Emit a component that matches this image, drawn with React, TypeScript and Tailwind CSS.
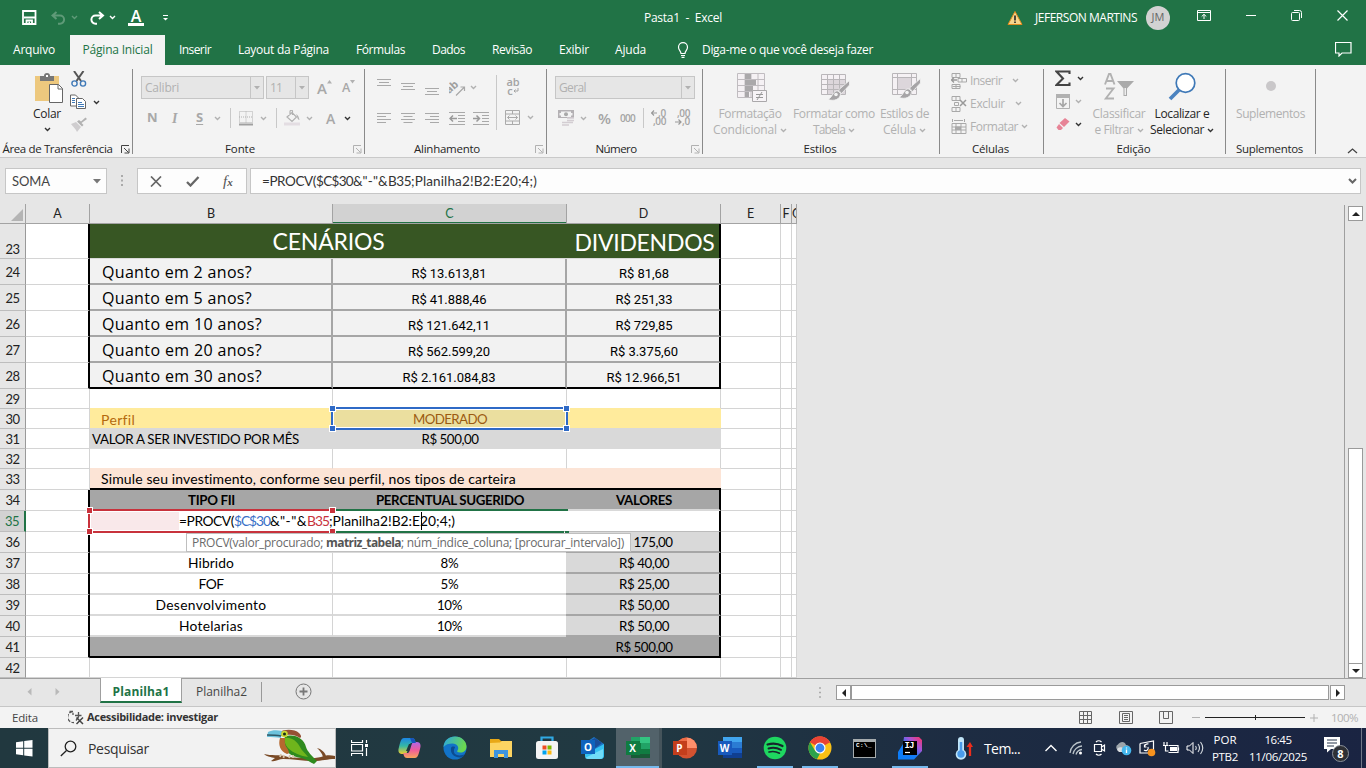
import React, { useLayoutEffect, useRef } from "react";

/* Text run whose tracking is adjusted so that it fills a given width. */
function T({ w, className = "", children }: { w: number; className?: string; children: React.ReactNode }) {
  const ref = useRef<HTMLSpanElement>(null);
  useLayoutEffect(() => {
    const el = ref.current;
    if (!el) return;
    el.style.letterSpacing = "0px";
    const n = (el.textContent || "").length || 1;
    const spacing = (w - el.getBoundingClientRect().width) / n;
    el.style.letterSpacing = `${spacing}px`;
  }, [w]);
  return (
    <span ref={ref} className={`inline-block shrink-0 whitespace-pre ${className}`}>
      {children}
    </span>
  );
}

function Svg({ w, h, className = "", children }: { w: number; h: number; className?: string; children: React.ReactNode }) {
  return (
    <svg width={w} height={h} viewBox={`0 0 ${w} ${h}`} fill="none" className={`block shrink-0 ${className}`}>
      {children}
    </svg>
  );
}

const Chev = ({ className = "text-[#b1b1b1]" }: { className?: string }) => (
  <Svg w={7} h={5} className={className}>
    <path d="M1 1l2.500 2.500L6 1" stroke="currentColor" strokeWidth="1.400" />
  </Svg>
);

const G = "#b1b1b1";

/* ---------- Title bar ---------- */

function TitleBar() {
  return (
    <div className="flex h-[35px] items-center text-white">
      <Svg w={15} h={15} className="ml-[22px]">
        <path d="M1 1h12.500v13H1z" stroke="#fff" strokeWidth="1.800" />
        <path d="M2 7.500h11M4.500 14v-3.500h5.500V14" stroke="#fff" strokeWidth="1.800" />
        <path d="M6.500 11.500h1.500V14H6.500z" fill="#fff" />
      </Svg>
      <Svg w={15} h={14} className="ml-[14px]">
        <path d="M5.500 1L1.500 4.500l4 3.500M2 4.500h7a4 4 0 010 8.200H7" stroke="#5f9a78" strokeWidth="2" />
      </Svg>
      <Chev className="ml-[5px] text-[#5f9a78]" />
      <Svg w={16} h={14} className="ml-[11px]">
        <path d="M10 1l4 3.500-4 3.500M14 4.500H6.500a4 4 0 000 8.200H8" stroke="#fff" strokeWidth="2" />
      </Svg>
      <Chev className="ml-[4px] text-white" />
      <div className="ml-[12px] flex w-4 flex-col items-center">
        <span className="h-[13px] font-['Open_Sans',sans-serif] text-[16px] leading-[13px] font-semibold">A</span>
        <div className="h-[3px] w-4 bg-white" />
      </div>
      <Svg w={7} h={8} className="ml-[18px]">
        <path d="M1 1.500h5" stroke="#fff" />
        <path d="M1 4h5L3.500 6.500z" fill="#fff" />
      </Svg>
      <T w={78} className="ml-[475px] text-[12px]">Pasta1  -  Excel</T>
      <Svg w={16} h={16} className="ml-[285px]">
        <path d="M8 1.500L15 14.500H1z" fill="#f8d58c" stroke="#e08a1e" />
        <path d="M8 5.500v5M8 11.500v1.600" stroke="#222" strokeWidth="1.600" />
      </Svg>
      <T w={102} className="ml-[12px] text-[12px]">JEFERSON MARTINS</T>
      <div className="ml-[9px] flex size-6 items-center justify-center rounded-full bg-[#d2d2d2] text-[11px] text-[#666]">JM</div>
      <Svg w={14} h={11} className="mb-[5px] ml-[27px]">
        <path d="M.5.500h13v10H.500zM.5 2.500h13M7 9V4.500M4.700 6.500L7 4.300l2.300 2.200" stroke="#fff" />
      </Svg>
      <Svg w={11} h={11} className="mb-[5px] ml-[35px]"><path d="M0 5.500h10" stroke="#fff" /></Svg>
      <Svg w={11} h={11} className="mb-[5px] ml-[34px]">
        <path d="M.5 3.500a1 1 0 011-1h6a1 1 0 011 1v6a1 1 0 01-1 1h-6a1 1 0 01-1-1zM3 .500h5.500a2 2 0 012 2V8" stroke="#fff" />
      </Svg>
      <Svg w={11} h={11} className="mb-[5px] ml-[35px]"><path d="M.5.500l10 10M10.500.500l-10 10" stroke="#fff" strokeWidth="1.200" /></Svg>
    </div>
  );
}

function Tabs() {
  return (
    <div className="flex h-[30px] items-center text-[12px] text-white">
      <T w={42} className="ml-[13px]">Arquivo</T>
      <div className="ml-[15px] flex h-full w-[95px] items-center justify-center bg-[#f3f3f3] text-[#217346]">
        <T w={70}>Página Inicial</T>
      </div>
      <T w={32} className="ml-[14px]">Inserir</T>
      <T w={91} className="ml-[27px]">Layout da Página</T>
      <T w={49} className="ml-[27px]">Fórmulas</T>
      <T w={33} className="ml-[27px]">Dados</T>
      <T w={40} className="ml-[27px]">Revisão</T>
      <T w={30} className="ml-[27px]">Exibir</T>
      <T w={31} className="ml-[26px]">Ajuda</T>
      <Svg w={12} h={16} className="ml-[31px]">
        <path d="M4 11.500C4 9 1.500 8 1.500 5.200a4.500 4.500 0 019 0C10.500 8 8 9 8 11.500zM4 13.500h4M4.500 15.300h3" stroke="#fff" strokeWidth="1.200" />
      </Svg>
      <T w={171} className="ml-[13px]">Diga-me o que você deseja fazer</T>
      <Svg w={17} h={16} className="mt-[-2px] ml-[462px]">
        <path d="M.5 1.500h15.500v10.500H7L4 15v-3H.500z" stroke="#fff" strokeWidth="1.200" />
      </Svg>
    </div>
  );
}

/* ---------- Ribbon ---------- */

function Launcher({ dark = false }: { dark?: boolean }) {
  return (
    <Svg w={9} h={9} className={dark ? "text-[#444]" : "text-[#b1b1b1]"}>
      <path d="M.5 8V.500H8M3 3l4.500 4.500M8 3.500V8H3.500" stroke="currentColor" />
    </Svg>
  );
}

function Group({ className, label, lw, launcher, dark, children }: {
  className: string; label: string; lw: number; launcher?: boolean; dark?: boolean; children: React.ReactNode;
}) {
  return (
    <div className={`mt-1 flex h-[85px] shrink-0 flex-col border-r border-[#8a8a8a] ${className}`}>
      <div className="h-[71px] shrink-0">{children}</div>
      <div className="flex h-[18px] shrink-0 items-center pr-[2px]">
        <div className={`flex flex-1 justify-center text-[11.500px] text-[#262626] ${launcher ? "pr-[6px]" : ""}`}><T w={lw}>{label}</T></div>
        {launcher && <Launcher dark={dark} />}
      </div>
    </div>
  );
}

function Clipboard() {
  return (
    <div className="flex pl-[30px]">
      <div className="flex w-[34px] flex-col items-center pt-[4px]">
        <Svg w={29} h={31} className="ml-[5px]">
          <path d="M0 3h24v25H0z" fill="#edc87e" />
          <path d="M5 3h4a3 3 0 016 0h4v5H5z" fill="#777" />
          <path d="M11 2h2v2h-2z" fill="#fff" />
          <path d="M14.500 11.500h9l4 4v14h-13z" fill="#fff" stroke="#666" />
          <path d="M23 11.500V16h4.500" stroke="#666" />
        </Svg>
        <T w={28} className="mt-[1px] text-[12px] leading-[18px] text-[#262626]">Colar</T>
        <Chev className="mt-[4px] text-[#333]" />
      </div>
      <div className="flex flex-col pl-[6px]">
        <Svg w={16} h={16} className="mt-[2px] ml-[1px]">
          <path d="M3 0l7 10M12.500 0l-7 10" stroke="#555" strokeWidth="2" />
          <circle cx="3.500" cy="12.500" r="2.600" stroke="#3f79b7" strokeWidth="1.400" />
          <circle cx="12" cy="12.500" r="2.600" stroke="#3f79b7" strokeWidth="1.400" />
        </Svg>
        <div className="mt-[7px] flex items-center">
          <Svg w={17} h={16}>
            <path d="M.5 1h5l3 3v8h-8z" fill="#fff" stroke="#666" />
            <path d="M6.500 4.500h6l3 3v7h-9z" fill="#fff" stroke="#666" />
            <path d="M2 4.500h3M2 6.500h3M2 8.500h3M8 8.500h4M8 10.500h6M8 12.500h6" stroke="#3f79b7" />
          </Svg>
          <Chev className="ml-[6px] text-[#333]" />
        </div>
        <Svg w={17} h={15} className="mt-[7px] ml-[1px]">
          <path d="M0 7l5-2 5 5-4 5C5 12 2 10 0 7z" fill="#cfcdcf" />
          <path d="M6 4.500l5 5 1.500-1.500-2-2 5.500-4L14.500.500 10 4.500l-2-1.500z" fill="#b1b1b1" />
        </Svg>
      </div>
    </div>
  );
}

function Combo({ className, text, tw }: { className: string; text: string; tw: number }) {
  return (
    <div className={`flex h-[23px] items-center border border-[#c6c6c6] bg-[#e6e6e6] pl-[3px] text-[12px] text-[#b1b1b1] ${className}`}>
      <T w={tw}>{text}</T>
      <div className="ml-auto flex h-full w-[13px] items-center justify-center border-l border-[#c6c6c6]">
        <Svg w={6} h={4}><path d="M0 0h6L3 3.500z" fill="#b1b1b1" /></Svg>
      </div>
    </div>
  );
}

function FontGroup() {
  return (
    <div className="text-[#a8a8a8]">
      <div className="flex h-[37px] items-center pt-[1px] pl-2">
        <Combo className="mt-[-1px] w-[123px]" text="Calibri" tw={34} />
        <Combo className="mt-[-1px] ml-[2px] w-[43px]" text="11" tw={12} />
        <span className="ml-[8px] text-[15px] leading-5 font-semibold">A</span>
        <Svg w={5} h={4} className="mb-[12px]"><path d="M0 3.500h5L2.500 0z" fill={G} /></Svg>
        <span className="ml-[10px] text-[12.500px] leading-5 font-semibold">A</span>
        <Svg w={5} h={4} className="mb-[12px]"><path d="M0 0h5L2.500 3.500z" fill={G} /></Svg>
      </div>
      <div className="flex h-[24px] items-center text-[13px] font-bold">
        <span className="ml-[14px] w-[25px]">N</span>
        <span className="w-[24px] font-['Liberation_Serif',serif] text-[14px] italic">I</span>
        <span className="w-[18px] underline underline-offset-2">S</span>
        <Chev />
        <div className="ml-[9px] h-5 w-px bg-[#c8c8c8]" />
        <Svg w={14} h={15} className="ml-[8px]">
          <path d="M.5.500h13v11H.500zM7 .500v11M0 6h14" stroke={G} strokeDasharray="1 1" />
          <path d="M0 13.500h14" stroke="#a0a0a0" strokeWidth="2" />
        </Svg>
        <Chev className="ml-[7px] text-[#b1b1b1]" />
        <div className="ml-[9px] h-5 w-px bg-[#c8c8c8]" />
        <Svg w={17} h={16} className="ml-[7px]">
          <path d="M3 7l5-4.500L12.500 7 8 11.500zM6 5V1.500a1 1 0 012.500 0V5" stroke={G} strokeWidth="1.200" />
          <path d="M12 4c2 1 3 3 3.500 6-2 0-2-3-3.500-6z" fill={G} />
          <path d="M0 12.500h16v3H0z" fill="#e3dde2" />
        </Svg>
        <Chev className="ml-[5px] text-[#b1b1b1]" />
        <span className="ml-[13px] text-[14px] font-semibold">A</span>
        <Chev className="ml-[9px] text-[#333]" />
      </div>
    </div>
  );
}

function Lines({ d, className = "" }: { d: string; className?: string }) {
  return <Svg w={15} h={12} className={className}><path d={d} stroke="#a9a9a9" /></Svg>;
}

function AlignGroup() {
  const three = "M0 1.500h14M2 4.500h10M0 7.500h14";
  return (
    <div className="flex pl-[12px]">
      <div className="w-[119px]">
        <div className="flex h-[37px] items-center">
          <Lines d={three} className="mb-[7px]" />
          <Lines d={three} className="mt-[1px] ml-[9px]" />
          <Lines d={three} className="mt-[11px] ml-[9px]" />
          <Svg w={17} h={16} className="ml-[9px]">
            <text x="-2" y="9" fontSize="11" fontFamily="Open Sans, sans-serif" fontWeight="700" fill="#a0a0a0" transform="rotate(-42 6 9)">ab</text>
            <path d="M7 15.500L15 7.500M11.500 7h4v4" stroke="#a8a8a8" strokeWidth="1.200" />
          </Svg>
          <Chev className="ml-[4px] text-[#b1b1b1]" />
        </div>
        <div className="flex h-[24px] items-center">
          <Lines d="M0 1.500h14M0 4.500h9M0 7.500h14M0 10.500h9" />
          <Lines d="M0 1.500h14M2.500 4.500h9M0 7.500h14M2.500 10.500h9" className="ml-[9px]" />
          <Lines d="M0 1.500h14M5 4.500h9M0 7.500h14M5 10.500h9" className="ml-[9px]" />
          <Svg w={16} h={13} className="ml-[9px]">
            <path d="M0 .500h16M9 3.500h7M9 6.500h7M9 9.500h7M0 12.500h16" stroke="#a9a9a9" />
            <path d="M1 6.500h7M4 3.500l-3 3 3 3" stroke="#999" strokeWidth="1.500" />
          </Svg>
          <Svg w={16} h={13} className="ml-[8px]">
            <path d="M0 .500h16M9 3.500h7M9 6.500h7M9 9.500h7M0 12.500h16" stroke="#a9a9a9" />
            <path d="M0 6.500h6M3.500 3.500l3 3-3 3" stroke="#999" strokeWidth="1.500" />
          </Svg>
        </div>
      </div>
      <div className="mt-[6px] h-[55px] w-px bg-[#c8c8c8]" />
      <div className="pl-[8px]">
        <div className="mt-[8px] flex h-[19px] w-4 flex-col items-center text-[11px] leading-[9px] font-semibold text-[#a4a4a4]">
          <span>ab</span>
          <div className="flex items-center"><span>c</span>
            <Svg w={6} h={7}><path d="M5 1v3H1M2.500 2.500L1 4l1.500 1.500" stroke="#a4a4a4" /></Svg>
          </div>
        </div>
        <div className="mt-[9px] flex h-[25px] items-center">
          <Svg w={15} h={15}>
            <path d="M.5.500h14v14H.500zM.5 4h14M.5 11h14M7.500 .500v3.500M7.500 11v3.500M2.500 7.500h10M4.500 5.500l-2 2 2 2M10.500 5.500l2 2-2 2" stroke="#aaa" />
          </Svg>
          <Chev className="ml-[7px] text-[#b1b1b1]" />
        </div>
      </div>
    </div>
  );
}

function NumberGroup() {
  return (
    <div className="pl-[8px]">
      <div className="flex h-[37px] items-center">
        <Combo className="w-[140px]" text="Geral" tw={27} />
      </div>
      <div className="flex h-[24px] items-center text-[#a4a4a4]">
        <Svg w={16} h={16} className="ml-[3px]">
          <path d="M0 0h16v8H0z" fill="#b4b1b4" />
          <path d="M3 1.500h10v1.500h1.500v2.500H13V7H3V5.500H1.500V3H3z" fill="#f3f3f3" />
          <circle cx="8" cy="4.200" r="2" fill="#a9a9a9" />
          <path d="M9 8h7M9 10.500h7M4 12.500h11M4 15h7" stroke="#d3cdd2" strokeWidth="1.700" />
        </Svg>
        <Chev className="ml-[6px] text-[#b1b1b1]" />
        <span className="ml-[11px] text-[15px] leading-4 font-semibold">%</span>
        <T w={15} className="ml-[9px] text-[10px] font-semibold">000</T>
        <div className="ml-[8px] h-[20px] w-px bg-[#c8c8c8]" />
        <div className="ml-[7px] flex h-[18px] w-[15px] flex-col text-[10px] leading-[9px] font-semibold">
          <div className="flex h-[8px] items-center justify-end"><Svg w={7} h={6}><path d="M0 3h6M3 .500L.500 3 3 5.500" stroke="#999" strokeWidth="1.200" /></Svg><T w={8}>,0</T></div>
          <div className="flex h-[9px] items-center justify-end"><T w={13}>,00</T></div>
        </div>
        <div className="ml-[9px] flex h-[18px] w-[15px] flex-col text-[10px] leading-[9px] font-semibold">
          <div className="flex h-[8px] items-center justify-end"><T w={13}>,00</T></div>
          <div className="flex h-[9px] items-center justify-end"><Svg w={7} h={6}><path d="M0 3h6M3.500 .500L6 3 3.500 5.500" stroke="#999" strokeWidth="1.200" /></Svg><T w={8}>,0</T></div>
        </div>
      </div>
    </div>
  );
}

function BigButton({ className, icon, a, aw, b, bw, dark = false }: {
  className: string; icon: React.ReactNode; a: string; aw: number; b: string; bw: number; dark?: boolean;
}) {
  return (
    <div className={`flex shrink-0 flex-col items-center text-[12px] leading-4 ${dark ? "text-[#262626]" : "text-[#b1b1b1]"} ${className}`}>
      <div className="mt-[3px] flex h-[34px] items-start">{icon}</div>
      <T w={aw}>{a}</T>
      {b && (
        <div className="flex items-center"><T w={bw}>{b}</T><Chev className={dark ? "ml-[3px] text-[#333]" : "ml-[3px] text-[#b1b1b1]"} /></div>
      )}
    </div>
  );
}

const Brush = () => (
  <>
    <path d="M28.500 6.500l-11 9.500 3 3.500L28.500 11z" fill="#a6a4a6" stroke="#f3f3f3" strokeWidth=".8" />
    <path d="M17 17c-5-1-5 6-10 8.500 6 2 12.500 0 12.500-6z" fill="#a6a4a6" stroke="#f3f3f3" strokeWidth=".8" />
    <circle cx="15" cy="20.500" r="1.800" fill="#f3f3f3" />
  </>
);

function StylesGroup() {
  return (
    <div className="flex">
      <BigButton className="w-[94px]" a="Formatação" aw={63} b="Condicional" bw={64} icon={
        <Svg w={31} h={31} className="ml-[5px]">
          <path d="M.5 1.500h27v24H.500z" fill="#f5f1f4" stroke="#c0bcc0" />
          <path d="M.5 7.500h27M.5 13.500h27M.5 19.500h27M8 1.500v24M14 1.500v24M21 1.500v24" stroke="#c0bcc0" />
          <path d="M8 2h6v5H8zM8 8h11v5H8zM8 14h8v5H8zM8 20h4v5H8z" fill="#aaa8aa" />
          <path d="M15.500 18.500h14v11h-14z" fill="#f7f4f7" stroke="#aaa8aa" />
          <path d="M19 22.500h7M19 25.500h7M25 20l-5 8" stroke="#999" />
        </Svg>} />
      <BigButton className="w-[74px]" a="Formatar como" aw={82} b="Tabela" bw={32} icon={
        <Svg w={30} h={31} className="mt-[2px] ml-[4px]">
          <path d="M.5 .500h24v20H.500z" fill="#f5f1f4" stroke="#b9b6b9" />
          <path d="M7 6h17v14H7z" fill="#dcd6db" />
          <path d="M.5 5.500h24M.5 10.500h24M.5 15.500h24M6.500 .500v20M12.500 .500v20M18.500 .500v20" stroke="#b9b6b9" />
          <Brush />
        </Svg>} />
      <BigButton className="ml-[5px] w-[57px]" a="Estilos de" aw={49} b="Célula" bw={33} icon={
        <Svg w={30} h={31} className="ml-[4px]">
          <path d="M.5 1.500h24v21H.500z" fill="#f5f1f4" stroke="#b9b6b9" />
          <path d="M6 6h14v11H6z" fill="#dcd6db" />
          <path d="M.5 5.500h24M.5 17.500h24M5.500 1.500v21M19.500 1.500v21" stroke="#b9b6b9" />
          <Brush />
        </Svg>} />
    </div>
  );
}

function CellsGroup() {
  const row = "flex h-[23px] items-center pl-[11px] text-[12px] text-[#b1b1b1]";
  return (
    <div>
      <div className={row}>
        <Svg w={16} h={16}>
          <path d="M1 .500h8v4H1zM5 .500v4M1 11.500h8v4H1zM5 11.500v4M1.500 13.500h8M7 5.500h8.500v3.500H7zM11 5.500V9" stroke="#a9a9a9" />
          <path d="M6 7H.500M3 4.500L.500 7 3 9.500" stroke="#999" strokeWidth="1.300" />
        </Svg>
        <T w={32} className="ml-[3px]">Inserir</T><Chev className="ml-[10px] text-[#b1b1b1]" />
      </div>
      <div className={row}>
        <Svg w={16} h={16}>
          <path d="M1 .500h8v4H1zM5 .500v4M1 11.500h8v4H1zM5 11.500v4M3.500 6.500h4v3h-4z" stroke="#a9a9a9" />
          <path d="M9 4l6 6M15 4l-6 6" stroke="#999" strokeWidth="1.500" />
        </Svg>
        <T w={35} className="ml-[3px]">Excluir</T><Chev className="ml-[10px] text-[#b1b1b1]" />
      </div>
      <div className={row}>
        <Svg w={16} h={16}>
          <path d="M1.500 0v3M13.500 0v3M3 1.500h9M1 4.500h14v10H1zM1 8h14M1 11h14M5 4.500v10M10 4.500v10" stroke="#a9a9a9" />
          <path d="M4 7.500h6V11H4z" fill="#a9a9a9" />
        </Svg>
        <T w={48} className="ml-[3px]">Formatar</T><Chev className="ml-[3px] text-[#b1b1b1]" />
      </div>
    </div>
  );
}

function EditGroup() {
  return (
    <div className="flex">
      <div className="w-[46px] pl-[11px]">
        <div className="flex h-[19px] items-center">
          <Svg w={16} h={17}>
            <path d="M14.500 4V1.500H1.500L8 8.500l-6.500 6.500H14.500V12.500" stroke="#444" strokeWidth="2.100" />
          </Svg>
          <Chev className="ml-[6px] text-[#333]" />
        </div>
        <div className="mt-[4px] flex h-[19px] items-center">
          <Svg w={15} h={16} className="ml-[1px]">
            <path d="M.5.500h13v14H.500z" stroke={G} /><path d="M0 0h14v4H0z" fill={G} />
            <path d="M7 5v7.500M3.500 9L7 12.500 10.500 9" stroke="#a6a6a6" strokeWidth="1.700" />
          </Svg>
          <Chev className="ml-[4px] text-[#b1b1b1]" />
        </div>
        <div className="mt-[4px] flex h-[19px] items-center">
          <Svg w={14} h={13} className="ml-[1px]">
            <path d="M9 0l4.500 3.500L8 9 3.500 5z" fill="#e78396" /><path d="M3 6l4 4-2 2H2.500L.500 9.500z" fill="#e78396" />
          </Svg>
          <Chev className="ml-[5px] text-[#333]" />
        </div>
      </div>
      <BigButton className="w-[58px]" a="Classificar" aw={53} b="e Filtrar" bw={39} icon={
        <Svg w={32} h={30} className="ml-[-1px]">
          <path d="M2 12.500L6 2h1.500l4 10.500M3.500 9h6.500M3 16.500h7.500L2.800 26.500H11" stroke="#b1b1b1" strokeWidth="1.900" />
          <path d="M14 9h17l-7 7.500V24h-3.500v-7.500z" fill="#aaa" /><path d="M21.500 16h1.500v7h-1.500z" fill="#eee" />
        </Svg>} />
      <BigButton dark className="w-[68px]" a="Localizar e" aw={55} b="Selecionar" bw={54} icon={
        <Svg w={28} h={30}>
          <circle cx="17.500" cy="11" r="9.300" fill="#fff" stroke="#3f79b7" strokeWidth="1.700" />
          <path d="M11 18L2 27" stroke="#4b83c0" strokeWidth="3.800" />
        </Svg>} />
    </div>
  );
}

function Ribbon() {
  return (
    <div className="flex h-[93px] border-b border-[#c9c9c9] bg-[#f3f3f3]">
      <Group className="w-[133px]" label="Área de Transferência" lw={110} launcher dark><Clipboard /></Group>
      <Group className="w-[232px]" label="Fonte" lw={30} launcher><FontGroup /></Group>
      <Group className="w-[182px]" label="Alinhamento" lw={66} launcher><AlignGroup /></Group>
      <Group className="w-[156px]" label="Número" lw={41} launcher><NumberGroup /></Group>
      <Group className="w-[237px]" label="Estilos" lw={33}><StylesGroup /></Group>
      <Group className="w-[104px]" label="Células" lw={37}><CellsGroup /></Group>
      <Group className="w-[182px]" label="Edição" lw={34}><EditGroup /></Group>
      <Group className="w-[90px]" label="Suplementos" lw={67}>
        <BigButton className="w-[89px]" a="Suplementos" aw={69} b="" bw={0} icon={<div className="mt-[9px] size-[10px] rounded-full bg-[#c9c7c9]" />} />
      </Group>
      <Svg w={11} h={8} className="mt-[82px] mr-[8px] ml-auto"><path d="M1 6l4.500-4L10 6" stroke="#444" strokeWidth="1.300" /></Svg>
    </div>
  );
}

function FormulaBar() {
  return (
    <div className="flex h-[46px] items-start bg-[#e6e6e6] pt-[10px] text-[#444]">
      <div className="ml-[5px] flex h-[26px] w-[102px] items-center border border-[#c6c6c6] bg-[#fdfdfd] pt-[2px] pl-[6px] font-['Lato',sans-serif] text-[13px]">
        <T w={38}>SOMA</T>
        <Svg w={8} h={5} className="mr-[5px] mb-[2px] ml-auto"><path d="M0 0h8L4 4.500z" fill="#777" /></Svg>
      </div>
      <Svg w={3} h={12} className="mt-[7px] ml-[14px]"><path d="M0 1h2M0 5.500h2M0 10h2" stroke="#aaa" strokeWidth="2" /></Svg>
      <div className="ml-[13px] flex h-[26px] w-[110px] items-center border border-[#c6c6c6] bg-[#fdfdfd]">
        <Svg w={12} h={11} className="ml-[12px]"><path d="M1 .500l10 10M11 .500L1 10.500" stroke="#666" strokeWidth="1.700" /></Svg>
        <Svg w={14} h={11} className="ml-[24px]"><path d="M1 6l3.500 3.500L12.500 1" stroke="#666" strokeWidth="2.300" /></Svg>
        <span className="ml-[23px] font-['Liberation_Serif',serif] text-[15px] leading-4 text-[#555] italic">f<span className="text-[11px] font-bold">x</span></span>
      </div>
      <div className="ml-[3px] flex h-[26px] w-[1111px] items-center border border-[#c6c6c6] bg-[#fdfdfd] pl-[11px] font-['Lato',sans-serif] text-[13.500px] text-[#333]">
        <T w={54}>=PROCV(</T><T w={37}>$C$30</T><T w={35}>&amp;"-"&amp;</T><T w={23}>B35</T><T w={126}>;Planilha2!B2:E20;4;)</T>
        <Svg w={9} h={6} className="mr-[3px] ml-auto"><path d="M1 1l3.500 3.500L8 1" stroke="#666" strokeWidth="2" /></Svg>
      </div>
    </div>
  );
}

/* ---------- Sheet ---------- */

const colA = "w-[64px]", colB = "w-[243px]", colC = "w-[234px]", colD = "w-[154px]";
const cell = "flex shrink-0 items-center justify-center ";
const grid = "border-r border-b border-[#d4d4d4] ";

function Row({ n, h, left = false, children }: { n: number; h: string; left?: boolean; children: React.ReactNode }) {
  const active = n === 35;
  return (
    <div className={`flex shrink-0 ${h}`}>
      <div className={`flex w-[26px] shrink-0 justify-center border-b border-b-[#bdbdbd] text-[13px] leading-4 ${n === 23 ? "items-end pb-px" : n < 29 ? "items-center pt-px" : "items-center"} ${active ? "border-r-2 border-r-[#217346] bg-[#d2d2d2] text-[#217346]" : "border-r border-r-[#999] bg-[#e6e6e6] text-[#222]"}`}>
        <T w={14}>{n}</T>
      </div>
      <div className={`shrink-0 border-b border-b-[#d4d4d4] bg-white ${colA} ${left ? "border-r-2 border-r-black" : "border-r border-r-[#d4d4d4]"}`} />
      {children}
      <div className={`w-[60px] shrink-0 bg-white ${grid}`} />
      <div className={`w-[11px] shrink-0 bg-white ${grid}`} />
      <div className={`w-[5px] shrink-0 bg-white ${grid}`} />
    </div>
  );
}

const scenarios = [
  { n: 24, q: "Quanto em 2 anos?", qw: 150, c: "R$ 13.613,81", cw: 75, d: "R$ 81,68", dw: 50 },
  { n: 25, q: "Quanto em 5 anos?", qw: 150, c: "R$ 41.888,46", cw: 75, d: "R$ 251,33", dw: 57 },
  { n: 26, q: "Quanto em 10 anos?", qw: 160, c: "R$ 121.642,11", cw: 82, d: "R$ 729,85", dw: 57 },
  { n: 27, q: "Quanto em 20 anos?", qw: 160, c: "R$ 562.599,20", cw: 82, d: "R$ 3.375,60", dw: 68 },
  { n: 28, q: "Quanto em 30 anos?", qw: 160, c: "R$ 2.161.084,83", cw: 93, d: "R$ 12.966,51", dw: 75 },
];

const funds = [
  { n: 36, name: "", nw: 0, p: "", pw: 0, v: "R$ 175,00", vw: 57 },
  { n: 37, name: "Hibrido", nw: 46, p: "8%", pw: 18, v: "R$ 40,00", vw: 50 },
  { n: 38, name: "FOF", nw: 25, p: "5%", pw: 18, v: "R$ 25,00", vw: 50 },
  { n: 39, name: "Desenvolvimento", nw: 111, p: "10%", pw: 25, v: "R$ 50,00", vw: 50 },
  { n: 40, name: "Hotelarias", nw: 64, p: "10%", pw: 25, v: "R$ 50,00", vw: 50 },
];

function HeadCell({ className, children }: { className: string; children?: React.ReactNode }) {
  return <div className={`flex shrink-0 items-center justify-center overflow-hidden border-r border-b border-[#a3a3a3] pt-[2px] ${className}`}>{children}</div>;
}

function Handle({ className }: { className: string }) {
  return <div className={`absolute size-[7px] border border-white ${className}`} />;
}

function Sheet() {
  return (
    <div className="relative h-[474px] w-[797px] shrink-0 overflow-hidden font-['Lato',sans-serif] text-[13.300px] text-black">
      <div className="flex h-5 text-[12.500px] text-[#222]">
        <HeadCell className="w-[26px]"><Svg w={12} h={12} className="ml-[8px]"><path d="M12 0v12H0z" fill="#b4b4b4" /></Svg></HeadCell>
        <HeadCell className={colA}>A</HeadCell>
        <HeadCell className={colB}>B</HeadCell>
        <HeadCell className={`bg-[#d2d2d2] text-[#217346] shadow-[inset_0_-1px_0_#217346] ${colC}`}>C</HeadCell>
        <HeadCell className={colD}>D</HeadCell>
        <HeadCell className="w-[60px]">E</HeadCell>
        <HeadCell className="w-[11px]">F</HeadCell>
        <HeadCell className="w-[5px] justify-start">G</HeadCell>
      </div>

      <Row n={23} h="h-[35px]" left>
        <div className={`${cell} w-[477px] border-b border-[#d9d9d9] bg-[#375623] pt-px text-[23px] text-white`}><T w={112}>CENÁRIOS</T></div>
        <div className={`${cell} ${colD} border-r-2 border-b border-r-black border-b-[#d9d9d9] bg-[#375623] pt-[3px] pl-[3px] text-[23px] text-white`}><T w={140}>DIVIDENDOS</T></div>
      </Row>
      {scenarios.map((s) => {
        const bottom = s.n === 28 ? "border-b-2 border-b-black " : "border-b-2 border-b-[#a6a6a6] ";
        return (
          <Row key={s.n} n={s.n} h="h-[26px]" left>
            <div className={`flex shrink-0 items-center border-r-2 border-r-[#a6a6a6] bg-[#f2f2f2] pt-[1px] pl-[12px] font-['Open_Sans',sans-serif] text-[16px] leading-5 ${bottom} ${colB}`}><T w={s.qw}>{s.q}</T></div>
            <div className={`${cell} border-r-2 border-r-[#a6a6a6] bg-[#f2f2f2] pt-[5px] font-['Roboto',sans-serif] text-[13px] ${bottom} ${colC}`}><T w={s.cw}>{s.c}</T></div>
            <div className={`${cell} border-r-2 border-r-black bg-[#f2f2f2] pt-[5px] pl-[2px] font-['Roboto',sans-serif] text-[13px] ${bottom} ${colD}`}><T w={s.dw}>{s.d}</T></div>
          </Row>
        );
      })}
      <Row n={29} h="h-[20px]">
        <div className={`shrink-0 border-r border-b border-r-[#d4d4d4] border-b-[#ffeb9c] bg-white ${colB}`} />
        <div className={`shrink-0 border-r border-b border-r-[#d4d4d4] border-b-[#ffeb9c] bg-white ${colC}`} />
        <div className={`shrink-0 border-r border-b border-r-[#d4d4d4] border-b-[#ffeb9c] bg-white ${colD}`} />
      </Row>
      <Row n={30} h="h-[20px]">
        <div className={`flex shrink-0 items-center border-b border-[#d9d9d9] bg-[#ffeb9c] pt-px pl-[11px] text-[14px] text-[#b4690e] ${colB}`}><T w={34}>Perfil</T></div>
        <div className={`${cell} bg-[#ebdf9f] pt-[2px] text-[#9c5b12] ${colC}`}><T w={74}>MODERADO</T></div>
        <div className={`shrink-0 border-b border-[#d9d9d9] bg-[#ffeb9c] ${colD}`} />
      </Row>
      <Row n={31} h="h-[20px]">
        <div className={`flex shrink-0 items-center bg-[#d9d9d9] pt-[2px] pl-[2px] ${colB}`}><T w={207}>VALOR A SER INVESTIDO POR MÊS</T></div>
        <div className={`${cell} bg-[#d9d9d9] pt-[2px] ${colC}`}><T w={57}>R$ 500,00</T></div>
        <div className={`shrink-0 bg-[#d9d9d9] ${colD}`} />
      </Row>
      <Row n={32} h="h-[20px]">
        <div className={`shrink-0 border-r border-b border-r-[#d4d4d4] border-b-[#fce4d6] bg-white ${colB}`} />
        <div className={`shrink-0 border-r border-b border-r-[#d4d4d4] border-b-[#fce4d6] bg-white ${colC}`} />
        <div className={`shrink-0 border-r border-b border-r-[#d4d4d4] border-b-[#fce4d6] bg-white ${colD}`} />
      </Row>
      <Row n={33} h="h-[21px]">
        <div className="flex w-[631px] shrink-0 items-center border-b-2 border-black bg-[#fce4d6] pl-[11px] text-[14px]"><T w={415}>Simule seu investimento, conforme seu perfil, nos tipos de carteira</T></div>
      </Row>
      <Row n={34} h="h-[21px]" left>
        <div className={`${cell} bg-[#a6a6a6] pt-px font-bold ${colB}`}><T w={47}>TIPO FII</T></div>
        <div className={`${cell} bg-[#a6a6a6] pt-px font-bold ${colC}`}><T w={148}>PERCENTUAL SUGERIDO</T></div>
        <div className={`${cell} border-r-2 border-b-2 border-r-black border-b-[#d9d9d9] bg-[#a6a6a6] pt-[3px] pl-[2px] font-bold ${colD}`}><T w={56}>VALORES</T></div>
      </Row>
      <Row n={35} h="h-[21px]" left>
        <div className="w-[89px] shrink-0 bg-[#f9e8ea]" />
        <div className="flex w-[542px] shrink-0 items-center border-r-2 border-b border-r-black border-b-[#bbb] bg-white pt-px text-[13.800px]">
          <T w={55}>=PROCV(</T>
          <T w={36} className="text-[#3a6fc7]">$C$30</T>
          <T w={37}>&amp;"-"&amp;</T>
          <T w={22} className="text-[#c8323c]">B35</T>
          <T w={126}>;Planilha2!B2:E20;4;)</T>
        </div>
      </Row>
      {funds.map((f) => (
        <Row key={f.n} n={f.n} h="h-[21px]" left>
          <div className={`${cell} border-r border-b-2 border-r-[#d4d4d4] border-b-[#d9d9d9] bg-white pt-px text-[13.800px] ${colB}`}>{f.name && <T w={f.nw}>{f.name}</T>}</div>
          <div className={`${cell} w-[233px] border-b-2 border-b-[#d9d9d9] bg-white pt-[3px]`}>{f.p && <T w={f.pw}>{f.p}</T>}</div>
          <div className={`${cell} w-[155px] border-r-2 border-b-2 border-r-black border-b-[#a6a6a6] bg-[#d9d9d9] pt-[3px] pl-[3px]`}><T w={f.vw}>{f.v}</T></div>
        </Row>
      ))}
      <Row n={41} h="h-[21px]" left>
        <div className="w-[477px] shrink-0 border-b-2 border-black bg-[#a6a6a6]" />
        <div className={`${cell} border-r-2 border-b-2 border-black bg-[#a6a6a6] pt-[3px] pl-[2px] ${colD}`}><T w={57}>R$ 500,00</T></div>
      </Row>
      <Row n={42} h="h-[20px]">
        <div className={`shrink-0 bg-white ${grid} ${colB}`} />
        <div className={`shrink-0 bg-white ${grid} ${colC}`} />
        <div className={`shrink-0 bg-white ${grid} ${colD}`} />
      </Row>

      {/* Reference range C30 */}
      <div className="absolute top-[203px] left-[331px] h-[23px] w-[237px] border-2 border-[#2f6ac6] shadow-[inset_0_0_0_1px_#fff]" />
      <Handle className="top-[201px] left-[329px] bg-[#2f6ac6]" />
      <Handle className="top-[201px] left-[563px] bg-[#2f6ac6]" />
      <Handle className="top-[221px] left-[329px] bg-[#2f6ac6]" />
      <Handle className="top-[221px] left-[563px] bg-[#2f6ac6]" />
      {/* Edited cell C35 and reference B35 */}
      <div className="absolute top-[305px] left-[333px] h-[2px] w-[235px] bg-[#217346]" />
      <div className="absolute top-[327px] left-[333px] h-[2px] w-[231px] bg-[#217346]" />
      <div className="absolute top-[327px] left-[565px] h-[3px] w-[4px] bg-[#217346]" />
      <div className="absolute top-[305px] left-[88px] h-[24px] w-[245px] border-y-2 border-l-2 border-[#c8323c] shadow-[inset_1px_1px_0_#fff,inset_0_-1px_0_#fff]" />
      <Handle className="top-[303px] left-[86px] bg-[#c8323c]" />
      <Handle className="top-[303px] left-[329px] bg-[#c8323c]" />
      <Handle className="top-[324px] left-[86px] bg-[#c8323c]" />
      <Handle className="top-[324px] left-[329px] bg-[#c8323c]" />
      <div className="absolute top-[308px] left-[421px] h-[18px] w-px bg-black" />
      <div className="absolute top-[329px] left-[186px] flex h-[19px] w-[445px] items-center border border-[#bfbfbf] bg-white pl-[5px] font-['Open_Sans',sans-serif] text-[12px] text-[#6a6a6a]">
        <T w={134}>{"PROCV(valor_procurado; "}</T><T w={75} className="font-bold text-[#555]">matriz_tabela</T><T w={223}>; núm_índice_coluna; [procurar_intervalo])</T>
      </div>
    </div>
  );
}

function Arrow({ d, className }: { d: string; className: string }) {
  return (
    <div className={`flex size-[15px] shrink-0 items-center justify-center border border-[#9a9a9a] bg-white ${className}`}>
      <Svg w={8} h={8}><path d={d} fill="#222" /></Svg>
    </div>
  );
}

function SheetTabs() {
  return (
    <div className="flex h-[29px] shrink-0 border-t border-b border-t-[#9f9f9f] border-b-[#c6c6c6] bg-[#e6e6e6] text-[12px]">
      <Svg w={5} h={8} className="mt-[9px] ml-[27px]"><path d="M4.500 0v7.500L.500 3.800z" fill="#b9b9b9" /></Svg>
      <Svg w={5} h={8} className="mt-[9px] ml-[23px]"><path d="M.5 0v7.500l4-3.700z" fill="#b9b9b9" /></Svg>
      <div className="mt-[-1px] ml-[40px] flex h-[25px] w-[82px] items-center justify-center border-x border-b-2 border-x-[#9f9f9f] border-b-[#217346] bg-white pt-[4px] font-bold text-[#217346]"><T w={57}>Planilha1</T></div>
      <T w={51} className="mt-[4px] ml-[14px] text-[#444]">Planilha2</T>
      <div className="mt-[3px] ml-[14px] h-[20px] w-px bg-[#999]" />
      <Svg w={17} h={17} className="mt-[4px] ml-[33px]">
        <circle cx="8.500" cy="8.500" r="7.500" stroke="#777" /><path d="M8.500 4.500v8M4.500 8.500h8" stroke="#777" strokeWidth="1.800" />
      </Svg>
      <Svg w={3} h={12} className="mt-[8px] mr-[14px] ml-auto"><path d="M0 1h2M0 5.500h2M0 10h2" stroke="#aaa" strokeWidth="1.500" /></Svg>
      <Arrow d="M6 0v8L2 4z" className="mt-[6px]" />
      <div className="mt-[6px] h-[15px] w-[478px] border border-[#9a9a9a] bg-white" />
      <Arrow d="M2 0v8l4-4z" className="mt-[6px] mr-[21px] ml-px" />
    </div>
  );
}

function StatusBar() {
  return (
    <div className="flex h-[21px] shrink-0 items-center bg-[#f3f3f3] text-[11.500px] text-[#444]">
      <T w={26} className="ml-[12px]">Edita</T>
      <Svg w={17} h={15} className="ml-[30px]">
        <path d="M4.500 1.500A5.500 5.500 0 006 12.500M1.500 1.500h3.500v3.500" stroke="#555" strokeWidth="1.300" strokeDasharray="3.500 1.300" />
        <path d="M7 5.500h6.500M10.500 2v5L8 10.500" stroke="#555" strokeWidth="1.300" />
        <path d="M8.500 7.500l6.500 6.500M15 7.500L8.500 14" stroke="#444" strokeWidth="1.500" />
      </Svg>
      <T w={131} className="ml-[2px] text-[11px] font-bold text-[#333]">Acessibilidade: investigar</T>
      <Svg w={13} h={13} className="ml-[861px]"><path d="M.5.500h12v12H.500zM4.500.500v12M8.500.500v12M.5 4.500h12M.5 8.500h12" stroke="#666" /></Svg>
      <Svg w={14} h={13} className="ml-[27px]"><path d="M.5.500h13v12H.500zM3.500 2.500h7v8h-7zM5 4.500h4M5 6.500h4M5 8.500h4" stroke="#666" /></Svg>
      <Svg w={14} h={13} className="ml-[26px]"><path d="M.5.500h13v12H.500zM4.500.500v7h5v-7M9.500 7.500V3" stroke="#666" /></Svg>
      <div className="ml-[19px] h-px w-[8px] bg-[#b1b1b1]" />
      <div className="ml-[5px] flex h-[5px] w-[100px] items-center justify-center bg-[linear-gradient(#222,#222)] bg-[length:100%_1px] bg-center bg-no-repeat"><div className="h-[5px] w-px bg-[#222]" /></div>
      <Svg w={8} h={8} className="ml-[5px]"><path d="M4 0v8M0 4h8" stroke="#b1b1b1" /></Svg>
      <T w={27} className="ml-[13px] text-[#b1b1b1]">100%</T>
    </div>
  );
}

/* ---------- Taskbar ---------- */

function Toucan() {
  return (
    <Svg w={72} h={36}>
      <path d="M1 25c7 2 15 0 24 3 12 1 24 2 33 0 5-2 9-2 14-1v3c-8 0-12 2-22 2-10 0-20-2-30-2-4 0-7 3-12 2l4-3c-4-1-8-1-11-4z" fill="#7a4a26" />
      <path d="M60 28c-1-4-3-6-6-9 4 1 8 4 9 8z" fill="#7a4a26" />
      <path d="M22 8C30 4 41 9 43 18c1 4 6 9 11 14l-3 3c-6-3-8-5-13-6-7-1-14-4-17-11-1-4-1-7 1-10z" fill="#2f8a1e" />
      <path d="M22 9c6-1 12 3 15 9 2 4 5 6 8 10-7-1-15-4-20-9-3-3-4-7-3-10z" fill="#6fb51c" />
      <path d="M17 3c4-3 15-3 19 1 2 2 3 4 1 5-3-2-8-4-13-3l-6 1z" fill="#955034" />
      <path d="M17 9c-2 7 0 13 7 16 3 0 2-3 0-6-3-4-2-8-2-10z" fill="#b5682f" />
      <path d="M5 3c4-2 9-2 14-1l-1 7C13 8 9 8 4 8z" fill="#6cc2dc" />
      <path d="M4 6c5 0 9 0 14 1" stroke="#2e5867" strokeWidth="1.300" />
      <circle cx="21.500" cy="5" r="3.300" fill="#c9d934" /><circle cx="21.500" cy="5" r="1.500" fill="#142b19" />
      <path d="M18 25l-1 3M21 26l-.5 3M27 26l-1 3M30 26v3" stroke="#d9c7aa" strokeWidth="1.800" />
    </Svg>
  );
}

function TaskItem({ className = "w-[46px]", run = false, active = false, children }: {
  className?: string; run?: boolean; active?: boolean; children: React.ReactNode;
}) {
  return (
    <div className={`flex h-full shrink-0 flex-col items-center ${className} ${active ? "border-r-[3px] border-[#45545b] bg-[#52626a]" : ""}`}>
      <div className="flex h-[38px] items-center justify-center pt-[2px]">{children}</div>
      {run && <div className={`h-[2px] bg-[#76b9ed] ${active ? "w-full" : "w-[36px]"}`} />}
    </div>
  );
}

const letter = "absolute top-[4px] left-0 flex size-[14px] items-center justify-center text-[10px] leading-none font-bold text-white ";

function Taskbar() {
  return (
    <div className="flex h-[40px] shrink-0 items-center bg-[linear-gradient(90deg,#21383f,#213942_45%,#1d2c42_70%,#1a2442)] text-white">
      <div className="flex h-full w-[48px] items-center justify-center">
        <Svg w={17} h={17}><path d="M0 2.300L7.200 1.300v6.500H0zM8.200 1.100L16.500 0v7.800H8.200zM0 8.800h7.200v6.500L0 14.300zM8.200 8.800h8.300v7.700l-8.300-1.100z" fill="#fff" /></Svg>
      </div>
      <div className="flex h-full w-[288px] items-center border border-[#bcbcbc] bg-[#f2f2f2] text-[#333]">
        <Svg w={17} h={17} className="ml-[11px]"><circle cx="10.500" cy="6.500" r="5.300" stroke="#222" strokeWidth="1.300" /><path d="M6.500 10.500L.800 16" stroke="#222" strokeWidth="1.300" /></Svg>
        <T w={61} className="ml-[11px] text-[14px]">Pesquisar</T>
        <div className="mb-[2px] ml-auto"><Toucan /></div>
      </div>
      <div className="flex h-full w-[48px] items-center justify-center">
        <Svg w={18} h={16}><path d="M.5 0v2.500h11V0M.5 4.500h11v6.500H.500zM.5 16v-2.500h11V16M15.500 0v3M15.500 8v8" stroke="#fff" strokeWidth="1.200" /><path d="M14 4h3v3h-3z" fill="#fff" /></Svg>
      </div>
      <TaskItem className="ml-[2px] w-[46px]">
        <Svg w={23} h={22}>
          <defs>
            <linearGradient id="cp1" x1="0" y1="0" x2="0" y2="1"><stop stopColor="#1b85e6" /><stop offset=".5" stopColor="#35b8a4" /><stop offset="1" stopColor="#f1cf2c" /></linearGradient>
            <linearGradient id="cp2" x1="0" y1="0" x2="0" y2="1"><stop stopColor="#b067e8" /><stop offset=".5" stopColor="#ee5b9b" /><stop offset="1" stopColor="#f7a55b" /></linearGradient>
          </defs>
          <path d="M6 1h8c3 0 3 3 4 5h-5c-2 0-3 9-5 11H4c-4 0-4-4-3-7 1-4 2-9 5-9z" fill="url(#cp1)" />
          <path d="M17 21H9c-3 0-3-3-4-5h5c2 0 3-9 5-11h4c4 0 4 4 3 7-1 4-2 9-5 9z" fill="url(#cp2)" />
          <path d="M12 1h2c3 0 3 3 4 5h-4z" fill="#1753bb" /><path d="M8 14h3l2-7h-2z" fill="#21363f" />
        </Svg>
      </TaskItem>
      <TaskItem>
        <Svg w={24} h={24}>
          <defs><linearGradient id="ed" x1="0" y1="0" x2="1" y2=".3"><stop stopColor="#2aa6e3" /><stop offset="1" stopColor="#6bd84f" /></linearGradient></defs>
          <circle cx="12" cy="12" r="11.500" fill="#1273c8" />
          <path d="M.5 11C1 4 6 .500 12 .500c7 0 11.500 5 11.500 10 0 4-3 6-6 6-3 0-4-1-3-2 2-3 0-7-5-7-4 0-7 1-9 3.500z" fill="url(#ed)" />
          <path d="M8 12c-1 6 4 10 10 9.500 2-.5 3-2 4-3.500-6 3-12 1-11-4 .3-1.500 1-2 1-3-2-1-4 0-4 1z" fill="#0c4c91" />
        </Svg>
      </TaskItem>
      <TaskItem>
        <Svg w={22} h={19}><path d="M0 0h9l2 2h11v16H0z" fill="#e8a817" /><path d="M0 4l10-.5L12 2h10v16H0z" fill="#fcd462" /><path d="M4 19v-8h14v8h-4v-4H8v4z" fill="#3f95de" /></Svg>
      </TaskItem>
      <TaskItem>
        <Svg w={24} h={24}><path d="M6.500 6V1.500h11V6" stroke="#30a9e3" strokeWidth="2.200" /><rect x="1" y="5" width="22" height="18" rx="2.500" fill="#f4f4f4" />
          <path d="M7.500 9.500h4v4h-4z" fill="#ef4e23" /><path d="M12.500 9.500h4v4h-4z" fill="#7fb900" /><path d="M7.500 14.500h4v4h-4z" fill="#00a3ee" /><path d="M12.500 14.500h4v4h-4z" fill="#fdb813" /></Svg>
      </TaskItem>
      <TaskItem>
        <div className="relative h-[24px] w-[24px]">
          <Svg w={24} h={24}><path d="M13 1l10 7v11c0 2-1 3-3 3H7c-2 0-3-1-3-3V7z" fill="#1d77c7" /><path d="M8 5l6-3 7 5-8 6z" fill="#1a4d9a" /><path d="M4 13h10l9-5v12c0 1-1 3-3 3H7c-2 0-3-2-3-3z" fill="#35c1f1" /><path d="M4 22l18-9v7c0 2-1 3-3 3H7z" fill="#70dcf8" /></Svg>
          <div className={`${letter} bg-[#0f63bd]`}>O</div>
        </div>
      </TaskItem>
      <TaskItem run active>
        <div className="relative h-[22px] w-[24px]">
          <Svg w={24} h={22}><path d="M5 0h19v21H5z" fill="#21a366" /><path d="M14 0h10v6H14z" fill="#33c481" /><path d="M5 6h10v6H5z" fill="#107c41" /><path d="M5 12h19v9H5z" fill="#185c37" /><path d="M14 12h10v5H14z" fill="#107c41" /></Svg>
          <div className={`${letter} bg-[#107c41]`}>X</div>
        </div>
      </TaskItem>
      <TaskItem className="w-[45px]">
        <div className="relative h-[22px] w-[24px]">
          <Svg w={24} h={22}><circle cx="13.500" cy="11" r="10.500" fill="#d35230" /><path d="M13.500.500A10.500 10.500 0 0124 11H13.500z" fill="#ff8f6b" /><path d="M3 11a10.500 10.500 0 0110.500-10.500V11z" fill="#ed6c47" /></Svg>
          <div className={`${letter} bg-[#c43e1c]`}>P</div>
        </div>
      </TaskItem>
      <TaskItem className="w-[45px]">
        <div className="relative h-[22px] w-[24px]">
          <Svg w={24} h={22}><path d="M5 0h19v6H5z" fill="#41a5ee" /><path d="M5 5h19v6H5z" fill="#2b7cd3" /><path d="M5 11h19v5H5z" fill="#185abd" /><path d="M5 16h19v5H5z" fill="#103f91" /></Svg>
          <div className={`${letter} bg-[#185abd]`}>W</div>
        </div>
      </TaskItem>
      <TaskItem className="w-[45px]" run>
        <Svg w={24} h={24}><circle cx="12" cy="12" r="11.300" fill="#1ed760" /><path d="M4.500 8.500c5-1.500 10.500-1 15 1.500" stroke="#17252b" strokeWidth="2.200" strokeLinecap="round" /><path d="M5.500 12.500c4-1.200 8.500-.8 12.500 1.300" stroke="#17252b" strokeWidth="1.900" strokeLinecap="round" /><path d="M6 16c3.500-1 7-.7 10.500 1.200" stroke="#17252b" strokeWidth="1.600" strokeLinecap="round" /></Svg>
      </TaskItem>
      <TaskItem className="w-[45px]" run>
        <Svg w={24} h={24}><circle cx="12" cy="12" r="11.500" fill="#fbc116" /><path d="M12 12L2 6.200a11.500 11.500 0 0120 0z" fill="#ea4335" /><path d="M22 6.500H12L2 6.200A11.500 11.500 0 0112 .500c4.500 0 8 2.300 10 6z" fill="#ea4335" /><path d="M2 6.200L7.200 15l4.800 2.500-3 5.600A11.500 11.500 0 012 6.200z" fill="#2ba24c" /><circle cx="12" cy="12" r="5.500" fill="#fff" /><circle cx="12" cy="12" r="4.400" fill="#3b82f1" /></Svg>
      </TaskItem>
      <TaskItem className="w-[45px]">
        <div className="h-[19px] w-[23px] border border-t-[3px] border-[#a6acae] bg-black pl-[2px] font-['Liberation_Mono',monospace] text-[6px] leading-[8px] font-bold"><T w={16}>C:\_</T></div>
      </TaskItem>
      <TaskItem className="w-[45px]" run>
        <div className="relative">
          <Svg w={24} h={24}>
            <defs><linearGradient id="ij" x1="0" y1="1" x2="1" y2="0"><stop stopColor="#087cfa" /><stop offset=".45" stopColor="#167cf4" /><stop offset=".7" stopColor="#a754d8" /><stop offset="1" stopColor="#fe315d" /></linearGradient></defs>
            <path d="M6 1h15l3 3v11l-8 8.500H0V16L5 8z" fill="url(#ij)" /><path d="M5 5h14v14H5z" fill="#000" />
            <path d="M7 16.500h5" stroke="#fff" strokeWidth="1.200" />
          </Svg>
          <T w={9} className="absolute top-[6px] left-[7px] font-['Liberation_Mono',monospace] text-[9px] leading-[9px] font-bold">IJ</T>
        </div>
      </TaskItem>
      <Svg w={18} h={24} className="ml-[23px]">
        <path d="M3 4a3 3 0 016 0v10a5.300 5.300 0 11-6 0z" fill="#c1e5f8" /><circle cx="6" cy="18" r="3.700" fill="#4a9bea" /><path d="M6 6v11" stroke="#4a9bea" strokeWidth="2.500" />
        <path d="M15 20V9" stroke="#ec2d1b" strokeWidth="2.300" /><path d="M11.500 11L15 6l3 5z" fill="#ec2d1b" />
      </Svg>
      <T w={36} className="ml-[11px] text-[14px]">Tem...</T>
      <Svg w={12} h={8} className="ml-[25px]"><path d="M.5 7L6 1.500 11.500 7" stroke="#fff" strokeWidth="1.400" /></Svg>
      <Svg w={14} h={14} className="ml-[12px]"><path d="M1 12A12 12 0 0112 1M4 13a10 10 0 019-8M7 13.500a7 7 0 016-5" stroke="#b9c3c9" strokeWidth="1.300" /><circle cx="11.500" cy="12" r="1.500" fill="#fff" /></Svg>
      <Svg w={13} h={16} className="ml-[10px]"><path d="M1.500 4.500h7v7h-7zM8.500 7l3-2v6l-3-2M3 2c1.500-1.500 4-1.500 5.500 0M3 14c1.500 1.500 4 1.500 5.500 0" stroke="#fff" strokeWidth="1.200" /></Svg>
      <Svg w={17} h={15} className="ml-[9px]"><path d="M3 9a3 3 0 010-5.500C5 0 10 0 11 4c4 0 5 4 3 6z" fill="#9ca4aa" /><path d="M2 9c0-3 5-4 7-1l2 3H4z" fill="#dadde0" /><circle cx="11.500" cy="9.500" r="4.800" fill="#43b6ed" /><path d="M11.500 8.500v3.500M11.500 6.500v1" stroke="#fff" strokeWidth="1.300" /></Svg>
      <Svg w={17} h={17} className="ml-[7px]"><path d="M1 3.500L14.500 1v10M1 3.500v9.500h8M9.500 4a3 3 0 00-4 3M5.500 4.500V7h2M5 10c2 1.500 5 0 4-3" stroke="#fff" strokeWidth="1.200" /><circle cx="12.500" cy="12.500" r="3.800" fill="#f7921e" /></Svg>
      <Svg w={17} h={13} className="ml-[7px]"><path d="M5.500 3.500h9.500v7H5.500M15.500 5.500v3M1 0v3M4 0v3M0 3.500h5M2.500 3v6h3" stroke="#fff" strokeWidth="1.200" /><path d="M7 5h7v4H7z" fill="#fff" /></Svg>
      <Svg w={18} h={14} className="ml-[6px]"><path d="M1 5h2.500L7 1.500v11L3.500 9H1z" stroke="#fff" /><path d="M9.500 5q1.500 2 0 4M12 3q3 4 0 8M14.500 1q4.500 6 0 12" stroke="#d8dde2" strokeWidth="1.100" /></Svg>
      <div className="ml-[7px] flex w-[28px] flex-col items-center text-[11.500px] leading-[17px]"><T w={23}>POR</T><T w={26}>PTB2</T></div>
      <div className="ml-[8px] flex w-[62px] flex-col items-center text-[11.500px] leading-[17px]"><T w={27}>16:45</T><T w={58}>11/06/2025</T></div>
      <div className="relative ml-[15px] h-[24px] w-[25px]">
        <Svg w={17} h={17}><path d="M0 1h16v12H7l-4 3.500V13H0z" fill="#fff" /><path d="M3 4h10M3 7h10M3 10h7" stroke="#26344b" /></Svg>
        <div className="absolute top-[9px] left-[8px] flex size-[17px] items-center justify-center rounded-full border border-[#8c929b] bg-[#2e3035] text-[11px] leading-none font-bold">8</div>
      </div>
      <div className="mr-[4px] ml-auto h-full w-px bg-[#707888]" />
    </div>
  );
}

export default function App() {
  return (
    <div className="flex h-[768px] w-[1366px] flex-col overflow-hidden bg-[#e6e6e6] font-['Open_Sans','Noto_Sans',sans-serif]">
      <div className="shrink-0 bg-[#217346]"><TitleBar /><Tabs /></div>
      <div className="shrink-0"><Ribbon /><FormulaBar /></div>
      <div className="flex h-[474px] shrink-0">
        <Sheet />
        <div className="mt-[1px] w-[548px] border-r border-[#9f9f9f]" />
        <div className="flex flex-col pt-[2px] pl-[3px]">
          <Arrow d="M0 6h8L4 2z" className="" />
          <div className="mt-[227px] h-[216px] w-[15px] border border-[#9a9a9a] bg-white" />
          <Arrow d="M0 2h8L4 6z" className="mt-[-1px]" />
        </div>
      </div>
      <SheetTabs />
      <StatusBar />
      <Taskbar />
    </div>
  );
}
